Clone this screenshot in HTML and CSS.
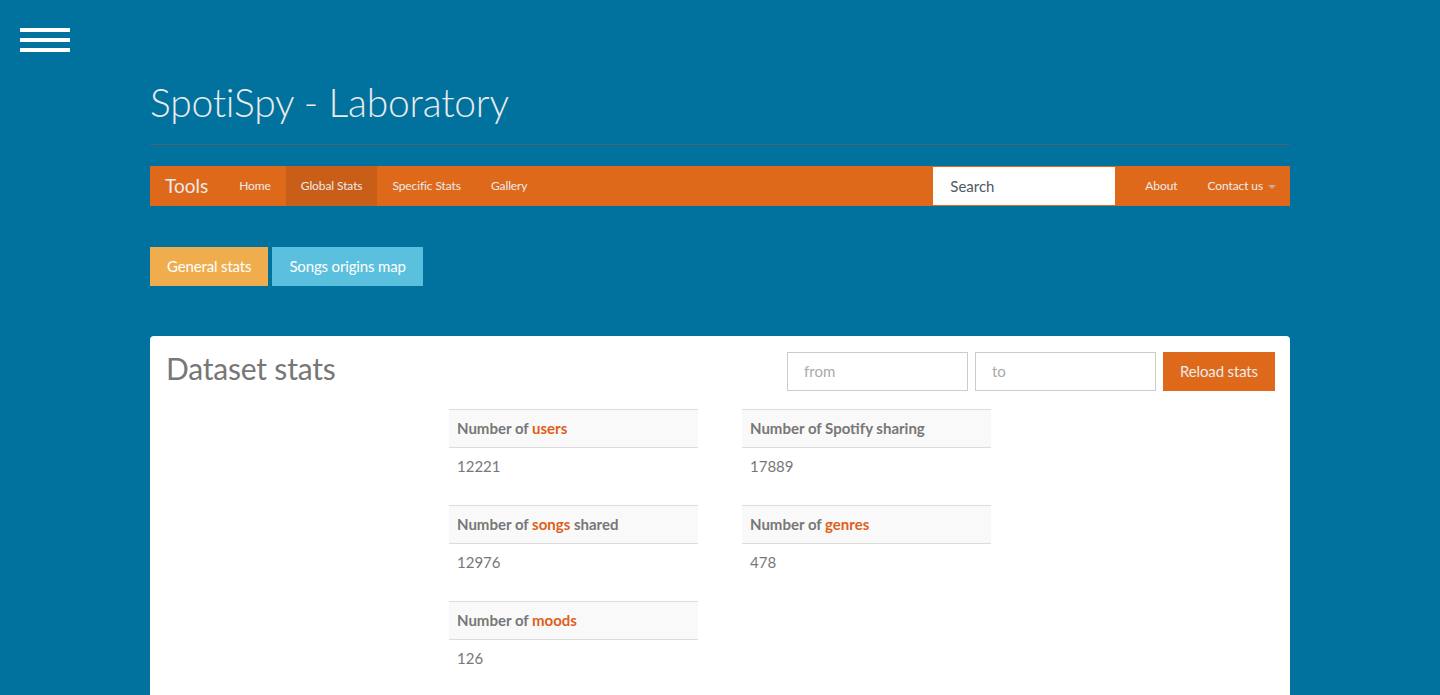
FILE: index.html
```html
<!DOCTYPE html>
<html lang="en">
<head>
<meta charset="utf-8">
<title>SpotiSpy - Laboratory</title>
<link rel="stylesheet" href="styles.css">
</head>
<body>
<button class="menu-toggle" aria-label="Menu"><span></span><span></span><span></span></button>
<div class="page">
  <div class="page-header"><h1>SpotiSpy - Laboratory</h1></div>
  <nav class="navbar">
    <span class="brand">Tools</span>
    <ul class="nav">
      <li><a>Home</a></li>
      <li class="active"><a>Global Stats</a></li>
      <li><a>Specific Stats</a></li>
      <li><a>Gallery</a></li>
    </ul>
    <input class="search" type="text" placeholder="Search">
    <ul class="nav nav-right">
      <li><a>About</a></li>
      <li><a>Contact us <span class="caret"></span></a></li>
    </ul>
  </nav>
  <div class="tabs">
    <button class="btn btn-warning">General stats</button>
    <button class="btn btn-info">Songs origins map</button>
  </div>
  <div class="panel">
    <div class="panel-head">
      <h2>Dataset stats</h2>
      <form class="range">
        <input class="field" type="text" placeholder="from">
        <input class="field" type="text" placeholder="to">
        <button class="btn btn-primary" type="button">Reload stats</button>
      </form>
    </div>
    <div class="stats">
      <table class="stat"><tr><th>Number of <span class="hl">users</span></th></tr><tr><td>12221</td></tr></table>
      <table class="stat"><tr><th>Number of Spotify sharing</th></tr><tr><td>17889</td></tr></table>
      <table class="stat"><tr><th>Number of <span class="hl">songs</span> shared</th></tr><tr><td>12976</td></tr></table>
      <table class="stat"><tr><th>Number of <span class="hl">genres</span></th></tr><tr><td>478</td></tr></table>
      <table class="stat"><tr><th>Number of <span class="hl">moods</span></th></tr><tr><td>126</td></tr></table>
    </div>
  </div>
</div>
</body>
</html>
```
FILE: styles.css
```css
* { box-sizing: border-box; }
html, body { margin: 0; padding: 0; }
body {
  background: #01729e;
  font-family: Lato, "Open Sans", sans-serif;
  font-size: 15px;
  line-height: 1.42857;
  color: #ebebeb;
  overflow: hidden;
}
.menu-toggle {
  position: absolute;
  top: 28px;
  left: 20px;
  width: 50px;
  padding: 0;
  border: 0;
  background: transparent;
  display: flex;
  flex-direction: column;
  gap: 6px;
}
.menu-toggle span { display: block; height: 4px; background: #fff; }
.page { width: 1140px; margin: 0 auto; padding-top: 81px; }
.page-header { padding-bottom: 20px; border-bottom: 1px solid #4f626d; }
.page-header h1 {
  margin: 0;
  font-size: 39px;
  line-height: 1.1;
  font-weight: 300;
  letter-spacing: -0.2px;
  color: #ebebeb;
}
.navbar {
  margin-top: 21px;
  height: 40px;
  background: #df691a;
  display: flex;
  align-items: stretch;
}
.brand { padding: 0 16px 0 15px; font-size: 19px; line-height: 40px; color: #ebebeb; }
.nav { list-style: none; margin: 0; padding: 0; display: flex; }
.nav a { display: block; padding: 0 15px; font-size: 12px; line-height: 40px; color: #ebebeb; letter-spacing: -0.1px; }
.nav .active a { background: #c85e17; }
.nav-right li:last-child a { padding-right: 14px; }
.search {
  margin: 1px 15px 1px auto;
  width: 182px;
  height: 38px;
  border: 0;
  padding: 0 17px;
  font-family: inherit;
  font-size: 15px;
  color: #555;
  background: #fff;
}
.search::placeholder { color: #4e5961; }
.caret {
  display: inline-block;
  width: 0; height: 0;
  margin-left: 2px;
  vertical-align: middle;
  border-top: 4px solid #c9a99c;
  border-left: 4px solid transparent;
  border-right: 4px solid transparent;
}
.tabs { margin-top: 41px; display: flex; gap: 4px; }
.btn {
  font-family: inherit;
  font-size: 15px;
  line-height: 21px;
  padding: 9px 17px;
  border: 0;
  border-radius: 0;
  color: #fff;
  letter-spacing: -0.15px;
  cursor: pointer;
}
.btn-warning { background: #f0ad4e; }
.btn-info { background: #5bc0de; }
.btn-primary { background: #df691a; color: #ebebeb; }
.panel {
  margin-top: 50px;
  background: #fff;
  border-radius: 4px;
  padding: 16px 15px 40px 15px;
  min-height: 400px;
}
.panel-head { display: flex; justify-content: space-between; align-items: flex-start; }
.panel-head h2 {
  margin: 0;
  padding-left: 1px;
  font-size: 30px;
  line-height: 33px;
  font-weight: 400;
  color: #777;
  letter-spacing: -0.2px;
}
.range { display: flex; gap: 7px; margin: 0; }
.field {
  width: 181px;
  height: 39px;
  border: 1px solid #ccc;
  padding: 0 16px;
  font-family: inherit;
  font-size: 15px;
  color: #555;
}
.field::placeholder { color: #aaa; }
.range .btn { width: 112px; padding: 9px 0; }
.stats {
  margin-top: 18px;
  display: grid;
  grid-template-columns: 249px 249px;
  column-gap: 44px;
  justify-content: center;
}
.stat { width: 100%; border-collapse: collapse; margin-bottom: 20px; color: #777; }
.stat th {
  text-align: left;
  font-weight: 700;
  padding: 8px;
  line-height: 21px;
  background: #f9f9f9;
  border-top: 1px solid #ddd;
  border-bottom: 1px solid #ddd;
}
.stat td { padding: 8px; line-height: 21px; }
.hl { color: #df5f1a; }
```
